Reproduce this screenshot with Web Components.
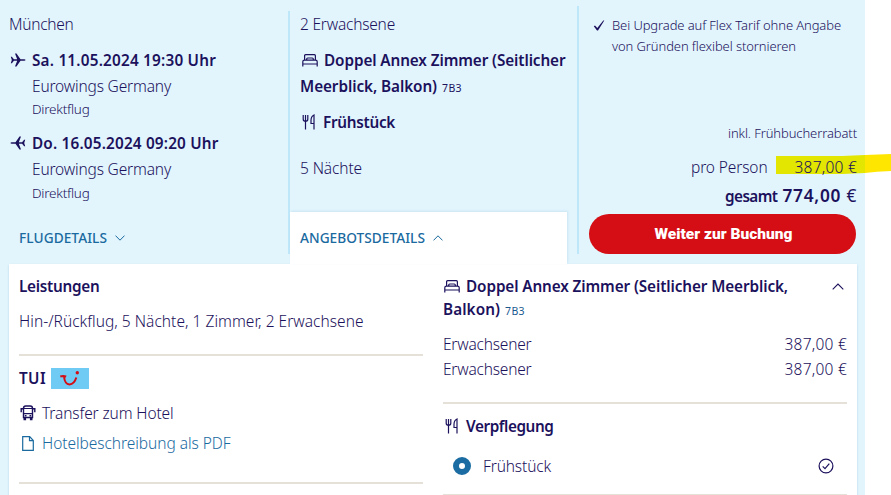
<!DOCTYPE html>
<html lang="de">
<head>
<meta charset="utf-8">
<title>Angebot</title>
<style>
body{margin:0;background:#fff;width:891px;height:495px;overflow:hidden}
</style>
</head>
<body>
<offer-page></offer-page>
<script>
const define=(name,html)=>{
  const tpl=document.createElement('template');
  tpl.innerHTML=html;
  customElements.define(name,class extends HTMLElement{
    constructor(){super();this.attachShadow({mode:'open'}).append(tpl.content.cloneNode(true));}
  });
};

/* One line of text; "w" is the line's width, reached by letter spacing. */
customElements.define('ui-text',class extends HTMLElement{
  constructor(){
    super();
    this.attachShadow({mode:'open'}).innerHTML=`<style>
      :host{display:block;flex:none;white-space:pre;font:300 15.5px/24px "Noto Sans","Open Sans",sans-serif}
      :host([bold]){font-weight:600;font-size:15.3px}
      :host([small]){font-size:13.5px;line-height:20px}
      :host([note]){font-size:13px;line-height:20px}
      :host([code]){font-size:10.5px;font-weight:400;line-height:24px;padding-top:2px;height:22px}
      :host([tab]){font-size:13.7px;line-height:20px;font-weight:500;color:#1a6a9f}
      :host([link]){color:#1a6a9f}
      :host([total]){font-size:17.3px;line-height:24px;font-weight:600}
      :host([cta]){font-family:Roboto,sans-serif;font-weight:900;font-size:15.5px;color:#fff}
      span{display:inline-block}
    </style><span><slot></slot></span>`;
  }
  connectedCallback(){
    const w=parseFloat(this.getAttribute('w'));
    const span=this.shadowRoot.querySelector('span');
    const n=this.textContent.length;
    const natural=span.getBoundingClientRect().width;
    if(w&&natural){span.style.letterSpacing=((w-natural)/n)+'px';span.style.width=w+'px';}
  }
});

const icons={
  out:[16,16,'<path d="M.8 4.800h1.100l2 2.400h3.300L5 1.600h1.500l4 5.600h3.700q1.300 0 1.300.8t-1.300.8h-3.700l-4 5.600H5l2.200-5.600H3.900l-2 2.400H.8l1-3.200z" fill="currentColor"/>'],
  back:[16,16,'<path d="M15.200 4.800h-1.100l-2 2.400H8.800L11 1.600H9.500l-4 5.600H1.800Q.5 7.200.5 8t1.300.8h3.700l4 5.600H11L8.800 8.800h3.300l2 2.400h1.100l-1-3.200z" fill="currentColor"/>'],
  bed:[16,13,'<g fill="none" stroke="currentColor" stroke-width="1.200"><path d="M2.600 6V1.700q0-1 1-1h8.800q1 0 1 1V6M.8 12.500V7.800q0-1.600 1.600-1.600h11.200q1.600 0 1.600 1.600v4.700M.8 10h14.400"/><path d="M4.700 6V5q0-1 1-1h4.600q1 0 1 1v1"/></g>'],
  fork:[14,16,'<path d="M1.200 1v4.200q0 2 2.300 2t2.300-2V1M3.500 1v14.500M12 15.500V1q-3 1.300-3 5.500v3h3" fill="none" stroke="currentColor" stroke-width="1.200"/>'],
  down:[10,6,'<path d="M.5.600 5 5.200 9.500.600" fill="none" stroke="currentColor" stroke-width="1"/>'],
  up:[10,6,'<path d="M.5 5.400 5 .800 9.500 5.400" fill="none" stroke="currentColor" stroke-width="1"/>'],
  upbig:[12,7,'<path d="M.7 6.400 6 1 11.300 6.400" fill="none" stroke="currentColor" stroke-width="1.100"/>'],
  check:[12,11,'<path d="M.8 6.200 2 5.400 4.300 8 10.300.500h1L5 10.400H4z" fill="currentColor"/>'],
  bus:[16,16,'<g fill="none" stroke="currentColor"><path d="M3.500 12.500V3.200Q3.500 1 5.700 1h4.600q2.200 0 2.200 2.200v9.300z" stroke-width="1.400"/><path d="M3.500 3.500h9M3.500 8.700h9" stroke-width="1.200"/><path d="M3.300 3.800H1.200v3.400M12.700 3.800h2.100v3.400" stroke-width="1.400"/></g><path d="M4.800 10h1.700v1.500H4.800zM9.500 10h1.700v1.500H9.500zM3.500 12.700h2.600v2.500H3.500zM9.900 12.700h2.600v2.500H9.900z" fill="currentColor"/>'],
  file:[12,15,'<path d="M.700.700h7l3.600 3.800v9.800H.700zM7.500.700v4h3.800" fill="none" stroke="currentColor" stroke-width="1.200"/>'],
  ok:[16,16,'<circle cx="8" cy="8" r="6.900" fill="none" stroke="currentColor" stroke-width="1.200"/><path d="M4.700 8.300 7 10.600l4.300-5" fill="none" stroke="currentColor" stroke-width="1.200"/>'],
  radio:[18,18,'<circle cx="9" cy="9" r="6" fill="none" stroke="#1b6ca3" stroke-width="6"/>'],
  tui:[38,21,'<path d="M0 0h38v21H0z" fill="#70cbf4"/><path d="M9.300 8.500Q12 7.600 15.200 8.500M13 8.500Q13.800 16.400 18.500 16.400 23.300 16.200 25.300 9.500" fill="none" stroke="#d40e14" stroke-width="2"/><circle cx="26.300" cy="4.800" r="1.700" fill="#d40e14"/>']
};
customElements.define('ui-icon',class extends HTMLElement{
  connectedCallback(){
    const [w,h,d]=icons[this.getAttribute('name')];
    if(!this.shadowRoot)this.attachShadow({mode:'open'});
    this.shadowRoot.innerHTML=`<style>:host{display:block;flex:none;width:${w}px;height:${h}px}svg{display:block}</style><svg width="${w}" height="${h}" viewBox="0 0 ${w} ${h}">${d}</svg>`;
  }
});

define('ui-row',`<style>:host{display:flex;align-items:center;height:24px}</style><slot></slot>`);
define('ui-rule',`<style>:host{display:block;height:2px;background:#e5e1d8}</style>`);

define('flight-info',`<style>
  :host{display:block}
  .body{padding-left:23px}
  ui-row{padding-bottom:2px}
  .ic{width:23px;flex:none}
  ui-text[small]{margin-top:var(--stop-gap,1px)}
</style>
<ui-row><div class="ic"><slot name="icon"></slot></div><slot name="time"></slot></ui-row>
<div class="body"><ui-text w="139">Eurowings Germany</ui-text><ui-text small w="57.5">Direktflug</ui-text></div>`);

define('flight-column',`<style>
  :host{display:block;box-sizing:border-box;width:288px;padding:12px 0 0 9px}
  flight-info{margin-top:12px}
  flight-info+flight-info{margin-top:12px;--stop-gap:2px}
  ui-icon{margin-left:1px}
  .tab{margin:23px 0 0 10px}
  .tab ui-icon{margin-left:8px;color:#1a6a9f}
</style>
<ui-text w="64.500">München</ui-text>
<flight-info><ui-icon slot="icon" name="out"></ui-icon><ui-text slot="time" bold w="184">Sa. 11.05.2024 19:30 Uhr</ui-text></flight-info>
<flight-info><ui-icon slot="icon" name="back"></ui-icon><ui-text slot="time" bold w="186.500">Do. 16.05.2024 09:20 Uhr</ui-text></flight-info>
<ui-row class="tab"><ui-text tab w="88">FLUGDETAILS</ui-text><ui-icon name="down"></ui-icon></ui-row>`);

define('room-column',`<style>
  :host{display:flex;flex-direction:column;box-sizing:border-box;width:289px;height:264px;padding-top:12px;
    background:linear-gradient(#bfe7fa,#bfe7fa) 0 11px/2px 243px no-repeat}
  .in{padding-left:12px}
  .room{margin-top:12px}
  .l2{margin-top:2px}
  .gap{margin-top:12px}
  .n{margin-top:22px}
  ui-icon[name=bed]{margin:0 6px 0 2px}
  ui-icon[name=fork]{margin:0 7px 0 2px}
  ui-text[code]{margin-left:5px}
  .tab{box-sizing:border-box;height:52px;width:277px;margin:auto 0 0 2px;padding-left:10px;background:#fff;
    box-shadow:1px -1px 2px rgba(80,150,190,.16)}
  .tab ui-icon{margin-left:8px;color:#1a6a9f}
</style>
<div class="in">
  <ui-text w="95">2 Erwachsene</ui-text>
  <ui-row class="room"><ui-icon name="bed"></ui-icon><ui-text bold w="241.500">Doppel Annex Zimmer (Seitlicher</ui-text></ui-row>
  <ui-row class="l2"><ui-text bold w="137">Meerblick, Balkon)</ui-text><ui-text code w="20">7B3</ui-text></ui-row>
  <ui-row class="gap"><ui-icon name="fork"></ui-icon><ui-text bold w="72">Frühstück</ui-text></ui-row>
  <ui-text class="n" w="62">5 Nächte</ui-text>
</div>
<ui-row class="tab"><ui-text tab w="125">ANGEBOTSDETAILS</ui-text><ui-icon name="up"></ui-icon></ui-row>`);

define('price-column',`<style>
  :host{display:block;position:relative;box-sizing:border-box;width:288px;height:264px;padding:15px 8px 0 12px;
    background:linear-gradient(#bfe7fa,#bfe7fa) 0 6px/2px 248px no-repeat}
  .usp{display:flex;padding-left:4px}
  .usp ui-icon{margin:5px 7px 0 0}
  ui-row{justify-content:flex-end;position:relative}
  .l2{margin-top:1px}
  .rebate{margin-top:65px}
  .pp{margin-top:10px}
  .pp>:last-child{margin-left:27px}
  .sum{margin-top:5px}
  .sum>:last-child{margin-left:5px}
  .eur{font-weight:400}
  .mark{position:absolute;left:199px;top:153px;width:115px;height:22px}
  .cta{display:flex;align-items:center;justify-content:center;width:267px;height:40px;margin-top:6px;
    border:0;padding:0 0 0 2px;border-radius:20px;background:#d40e14}
</style>
<svg class="mark" viewBox="0 0 115 22"><path d="M0 3h66l23-1v18L66 21H0z" fill="#e2e600"/><path d="M89 2l26-1v17l-14 .7L89 20z" fill="#ffe600"/></svg>
<div class="usp"><ui-icon name="check"></ui-icon><div>
  <ui-text note w="229">Bei Upgrade auf Flex Tarif ohne Angabe</ui-text>
  <ui-text note class="l2" w="184">von Gründen flexibel stornieren</ui-text></div></div>
<ui-row class="rebate"><ui-text note w="129">inkl. Frühbucherrabatt</ui-text></ui-row>
<ui-row class="pp"><ui-text w="76.500">pro Person</ui-text><ui-text w="62.500">387,00 €</ui-text></ui-row>
<ui-row class="sum"><ui-text bold w="52.500">gesamt</ui-text><ui-text total w="74.500">774,00 <span class="eur">€</span></ui-text></ui-row>
<button class="cta"><ui-text cta w="138">Weiter zur Buchung</ui-text></button>`);

define('services-column',`<style>
  :host{display:block;width:404px;padding:10px 0 0 10px}
  .d{margin-top:11px}
  .r1{margin-top:21px}
  .tui{margin-top:10px}
  .tui ui-icon{margin-left:5px}
  .tr{margin-top:11px}
  .tr ui-icon{margin:0 6px 0 1px}
  .pdf{margin-top:6px;color:#1a6a9f}
  .pdf ui-icon{margin:0 8px 0 3px}
  .r2{margin-top:27px}
</style>
<ui-text bold w="80.500">Leistungen</ui-text>
<ui-text class="d" w="344.500">Hin-/Rückflug, 5 Nächte, 1 Zimmer, 2 Erwachsene</ui-text>
<ui-rule class="r1"></ui-rule>
<ui-row class="tui"><ui-text bold w="27">TUI</ui-text><ui-icon name="tui"></ui-icon></ui-row>
<ui-row class="tr"><ui-icon name="bus"></ui-icon><ui-text w="131.500">Transfer zum Hotel</ui-text></ui-row>
<ui-row class="pdf"><ui-icon name="file"></ui-icon><ui-text link w="188.500">Hotelbeschreibung als PDF</ui-text></ui-row>
<ui-rule class="r2"></ui-rule>`);

define('price-line',`<style>:host{display:flex;justify-content:space-between;height:25px}</style>
<ui-text w="88.500">Erwachsener</ui-text><ui-text w="62.500">387,00 €</ui-text>`);

define('booking-column',`<style>
  :host{display:block;width:404px;padding:10px 10px 0 0}
  .h{justify-content:space-between}
  .h div{display:flex;align-items:center}
  .h>ui-icon{margin-right:3px}
  ui-icon[name=bed]{margin:0 6px 0 1px}
  ui-icon[name=fork]{margin:0 7px 0 2px}
  .l2{margin-top:-1px;height:24px}
  ui-text[code]{margin-left:5px;color:#1a5a8f}
  .p{margin-top:11px}
  .r1{margin-top:20px}
  .v{margin-top:10px}
  .b{margin-top:16px;padding:0 13px 0 10px}
  .b :nth-child(2){margin:0 auto 0 12px}
  .r2{margin-top:16px}
</style>
<ui-row class="h"><div><ui-icon name="bed"></ui-icon><ui-text bold w="322">Doppel Annex Zimmer (Seitlicher Meerblick,</ui-text></div><ui-icon name="upbig"></ui-icon></ui-row>
<ui-row class="l2"><ui-text bold w="57">Balkon)</ui-text><ui-text code w="20">7B3</ui-text></ui-row>
<price-line class="p"></price-line><price-line></price-line>
<ui-rule class="r1"></ui-rule>
<ui-row class="v"><ui-icon name="fork"></ui-icon><ui-text bold w="87.500">Verpflegung</ui-text></ui-row>
<ui-row class="b"><ui-icon name="radio"></ui-icon><ui-text w="68">Frühstück</ui-text><ui-icon name="ok"></ui-icon></ui-row>
<ui-rule class="r2"></ui-rule>`);

define('offer-page',`<style>
  :host{display:block;width:865px;height:495px;background:#e2f5fd;color:#1b115c}
  header{display:flex;height:264px}
  main{display:flex;justify-content:space-between;width:848px;height:231px;margin-left:9px;background:#fff;
    box-shadow:0 1px 2px rgba(80,150,190,.35)}
</style>
<header><flight-column></flight-column><room-column></room-column><price-column></price-column></header>
<main><services-column></services-column><booking-column></booking-column></main>`);
</script>
</body>
</html>
